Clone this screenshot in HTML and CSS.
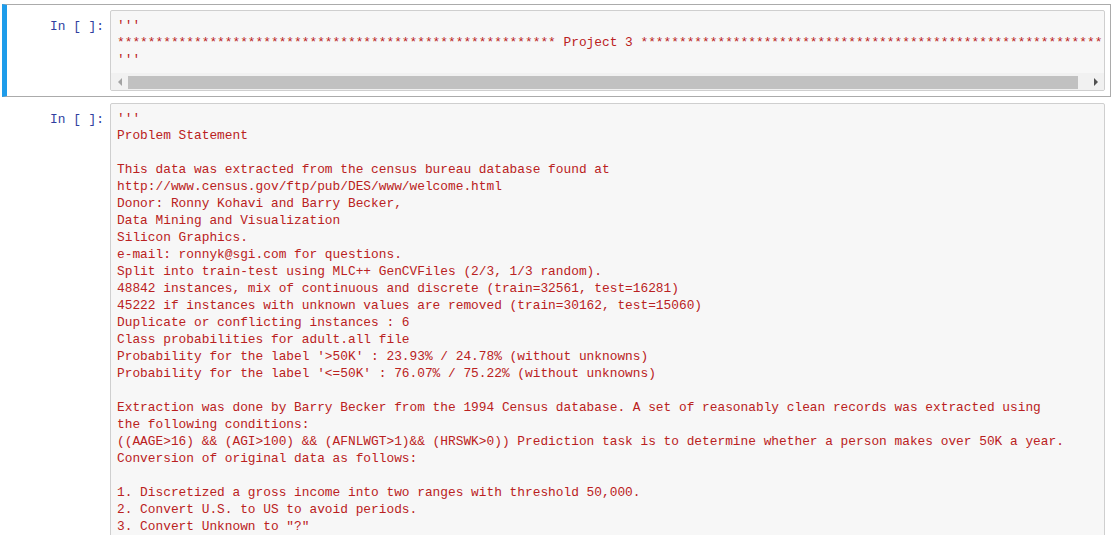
FILE: index.html
```html
<!DOCTYPE html>
<html>
<head>
<meta charset="utf-8">
<link rel="stylesheet" href="styles.css">
</head>
<body>
<div class="notebook">
  <div class="cell selected">
    <div class="prompt">In&nbsp;[&nbsp;]:</div>
    <div class="input">
      <pre class="code clip">'''
********************************************************* Project 3 ************************************************************
'''</pre>
      <div class="hscroll">
        <div class="sbtn"><span class="arrow-left"></span></div>
        <div class="track"><div class="thumb"></div></div>
        <div class="sbtn"><span class="arrow-right"></span></div>
      </div>
    </div>
  </div>
  <div class="cell">
    <div class="prompt">In&nbsp;[&nbsp;]:</div>
    <div class="input">
      <pre class="code">'''
Problem Statement

This data was extracted from the census bureau database found at
http://www.census.gov/ftp/pub/DES/www/welcome.html
Donor: Ronny Kohavi and Barry Becker,
Data Mining and Visualization
Silicon Graphics.
e-mail: ronnyk@sgi.com for questions.
Split into train-test using MLC++ GenCVFiles (2/3, 1/3 random).
48842 instances, mix of continuous and discrete (train=32561, test=16281)
45222 if instances with unknown values are removed (train=30162, test=15060)
Duplicate or conflicting instances : 6
Class probabilities for adult.all file
Probability for the label '&gt;50K' : 23.93% / 24.78% (without unknowns)
Probability for the label '&lt;=50K' : 76.07% / 75.22% (without unknowns)

Extraction was done by Barry Becker from the 1994 Census database. A set of reasonably clean records was extracted using
the following conditions:
((AAGE&gt;16) &amp;&amp; (AGI&gt;100) &amp;&amp; (AFNLWGT&gt;1)&amp;&amp; (HRSWK&gt;0)) Prediction task is to determine whether a person makes over 50K a year.
Conversion of original data as follows:

1. Discretized a gross income into two ranges with threshold 50,000.
2. Convert U.S. to US to avoid periods.
3. Convert Unknown to "?"</pre>
    </div>
  </div>
</div>
</body>
</html>
```

FILE: styles.css
```css
html, body {
  margin: 0;
  padding: 0;
  background: #ffffff;
  overflow: hidden;
}

body {
  font-family: "Liberation Mono", "DejaVu Sans Mono", monospace;
  font-size: 12.83px;
}

.notebook {
  padding: 4px 0 0 2px;
  width: 1109px;
}

.cell {
  display: flex;
  align-items: flex-start;
  border: 1px solid transparent;
  border-left-width: 5px;
  padding: 5px;
  border-radius: 2px;
}

.cell.selected {
  border-color: #ababab;
  border-left-color: #1e9cea;
  border-radius: 0;
}

.prompt {
  flex: 0 0 98px;
  box-sizing: border-box;
  text-align: right;
  color: #303f9f;
  line-height: 17px;
  padding: 8px 6px 0 0;
  white-space: nowrap;
}

.input {
  flex: 1 1 auto;
  min-width: 0;
  background: #f7f7f7;
  border: 1px solid #cfcfcf;
  border-radius: 2px;
  overflow: hidden;
}

.code {
  margin: 0;
  padding: 6px 0 6px 6px;
  font-family: inherit;
  font-size: inherit;
  line-height: 17px;
  color: #ba2121;
  white-space: pre;
}

.code.clip {
  overflow: hidden;
  padding-bottom: 5px;
}

.hscroll {
  display: flex;
  height: 17px;
  background: #f1f1f1;
}

.sbtn {
  flex: 0 0 17px;
  display: flex;
  align-items: center;
  justify-content: center;
}

.track {
  flex: 1 1 auto;
  display: flex;
  align-items: center;
}

.thumb {
  width: 950px;
  height: 13px;
  margin-top: 1px;
  background: #c1c1c1;
}

.arrow-left {
  width: 0;
  height: 0;
  border-top: 4px solid transparent;
  border-bottom: 4px solid transparent;
  border-right: 4px solid #a3a3a3;
}

.arrow-right {
  width: 0;
  height: 0;
  border-top: 4px solid transparent;
  border-bottom: 4px solid transparent;
  border-left: 4px solid #505050;
}
```
